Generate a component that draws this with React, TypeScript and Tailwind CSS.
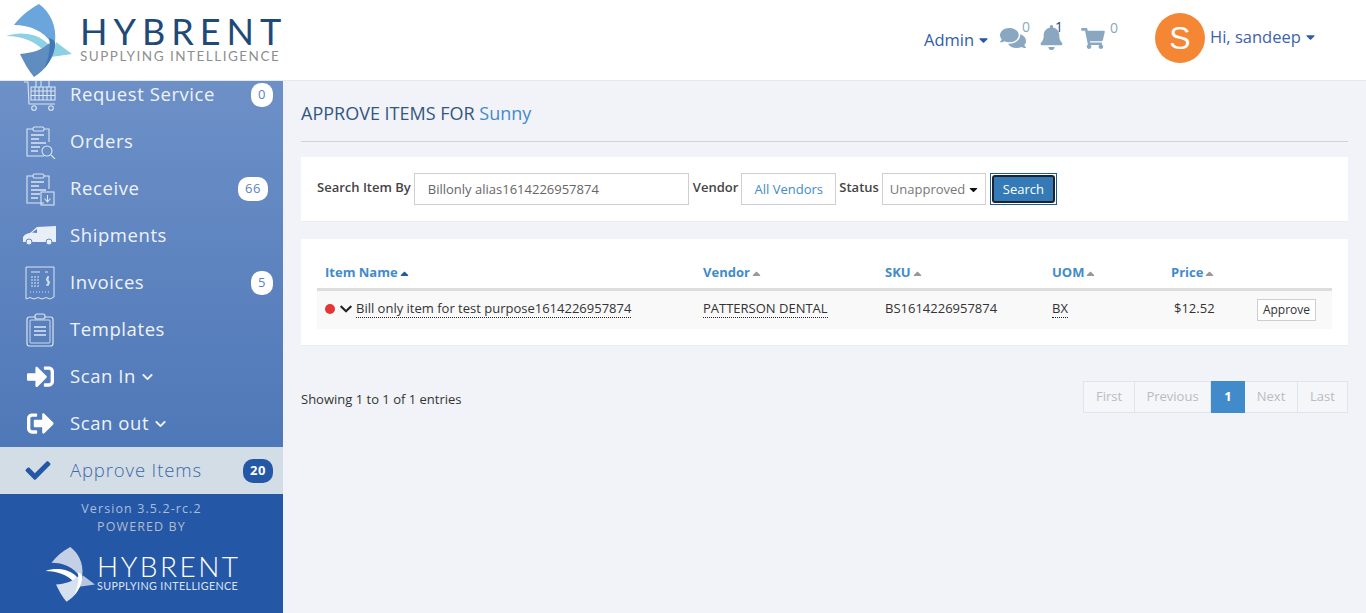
import React from "react";
import { FaComments, FaBell, FaShoppingCart, FaCheck, FaSignInAlt, FaSignOutAlt, FaChevronDown, FaCaretDown, FaCaretUp } from "react-icons/fa";

const sans = "font-['Open_Sans',sans-serif]";

function Sail({ mono, className }: { mono?: boolean; className?: string }) {
  return (
    <svg viewBox="0 0 80 80" className={className}>
      <path d="M39 4 C28 10 20 17 14 25 C30 25 44 31 52 44 L55 42 C57 26 50 12 39 4 Z" fill={mono ? "#c4d0e6" : "#6aa6dc"} />
      <path d="M6 36 C20 31 38 33 48 44 C47 47 45 49 43 50 C36 42 22 36 6 36 Z" fill={mono ? "#ffffff" : "#8ed0e4"} />
      <path d="M56 42 L72 54 L51 57 C53 52 55 47 56 42 Z" fill={mono ? "#b8c7e0" : "#8dd0e2"} />
      <path d="M20 54 C32 53 42 50 48 44 L55 42 C55 56 46 70 34 77 C28 70 24 62 20 54 Z" fill={mono ? "#d7e0ef" : "#5f8dbf"} />
      <path d="M49 38 C53 39 56 41 55 46 C54 54 50 62 44 69 C49 58 51 46 49 38 Z" fill={mono ? "#ffffff" : "#3f78b4"} />
    </svg>
  );
}

function Clip({ kind }: { kind: "search" | "down" }) {
  return (
    <svg viewBox="0 0 32 34" className="h-[34px] w-[32px]" fill="none" stroke="#dbe5f3" strokeWidth="1.1">
      <path d="M9 4 H3 V31 H20" />
      <path d="M20 4 H25 V17" />
      <rect x="9" y="2" width="11" height="4" rx="1.5" />
      <path d="M7 10 H20 M7 14 H15 M7 18 H22 M7 22 H16 M7 26 H14" strokeWidth="1.3" />
      {kind === "search" && (<><circle cx="23" cy="26" r="5" /><path d="M27 30 L31 34" /></>)}
      {kind === "down" && (<><rect x="17" y="20" width="13" height="13" /><path d="M23.500 23 V29 M20.500 26.500 L23.500 30 L26.500 26.500" /></>)}
    </svg>
  );
}

function ClipPlain() {
  return (
    <svg viewBox="0 0 28 34" className="h-[34px] w-[28px]" fill="none" stroke="#dbe5f3" strokeWidth="1.2">
      <rect x="1" y="4" width="26" height="29" rx="2.500" />
      <rect x="4" y="7" width="20" height="23" rx="1" strokeWidth="0.900" />
      <rect x="9" y="1" width="10" height="5" rx="2" fill="#5f87c0" />
      <path d="M8 14 H20 M8 18 H20 M8 22 H20" strokeWidth="1.400" />
    </svg>
  );
}

function CartGrid() {
  return (
    <svg viewBox="0 0 34 34" className="h-[34px] w-[34px]" fill="none" stroke="#dbe5f3" strokeWidth="1.1">
      <path d="M1 4 H5 L6 26 H32" />
      <path d="M8 9 H32 V22 H8 Z M8 13 H32 M8 17.500 H32 M12 9 V22 M16 9 V22 M20 9 V22 M24 9 V22 M28 9 V22" />
      <path d="M13 9 V2 M18 9 V2 M26 9 V2 M13 2 H18" />
      <circle cx="11" cy="30" r="2.300" /><circle cx="28" cy="30" r="2.300" />
    </svg>
  );
}

function Van() {
  return (
    <svg viewBox="0 0 34 20" className="h-[20px] w-[34px]" fill="#e9eff8">
      <path d="M14 1 L33 0 V16 H0 V11 C2 8 5 7 7 7 Z" />
      <path d="M9 6.500 L14 3 V7 Z" fill="#6088c0" />
      <circle cx="6" cy="16" r="3" stroke="#6088c0" /><circle cx="26" cy="16" r="3" stroke="#6088c0" />
    </svg>
  );
}

function Invoice() {
  return (
    <svg viewBox="0 0 30 34" className="h-[34px] w-[30px]" fill="none" stroke="#dbe5f3" strokeWidth="1">
      <path d="M1 1 H29 V31 L25 33 L21 31.500 L17 33 L13 31.500 L9 33 L5 31.500 L1 33 Z" />
      <path d="M6 6 H15 M20 6 H23" strokeWidth="1.200" />
      <path d="M6 11 H15 M6 14 H15 M6 17 H15 M6 20 H15" strokeDasharray="2 1" strokeWidth="1.200" />
      <path d="M5 26 H25" strokeDasharray="1 2" />
      <path d="M24 11 C21 11 21 15 23 15 C25 15 25 19 21 19 M23 10 V20" strokeWidth="1.100" />
    </svg>
  );
}

const menu: { label: string; icon: React.ReactNode; badge?: string; chevron?: boolean }[] = [
  { label: "Request Service", icon: <CartGrid />, badge: "0" },
  { label: "Orders", icon: <Clip kind="search" /> },
  { label: "Receive", icon: <Clip kind="down" />, badge: "66" },
  { label: "Shipments", icon: <Van /> },
  { label: "Invoices", icon: <Invoice />, badge: "5" },
  { label: "Templates", icon: <ClipPlain /> },
  { label: "Scan In", icon: <FaSignInAlt className="h-[27px] w-[27px] text-white" />, chevron: true },
  { label: "Scan out", icon: <FaSignOutAlt className="h-[27px] w-[27px] text-white" />, chevron: true },
];

function Sidebar() {
  return (
    <aside className="flex w-[283px] shrink-0 flex-col bg-[#2557a7]">
      <div className="h-[366px] overflow-hidden bg-gradient-to-b from-[#6d90c7] to-[#4f78b8]">
        <div className="-mt-[10px]">
          {menu.map((m) => (
            <div key={m.label} className="flex h-[47px] items-center text-white">
              <div className="flex w-[70px] shrink-0 justify-center pl-[10px]">{m.icon}</div>
              <span className="-translate-y-px text-[18.500px] tracking-[0.58px] text-[#eef3fa]">{m.label}</span>
              {m.chevron && <FaChevronDown className="ml-[6px] h-[12px] w-[11px] text-[#eef3fa]" />}
              {m.badge && (
                <span className={`ml-auto flex h-[24px] items-center justify-center rounded-[10px] bg-white text-[13px] font-medium tracking-[0.5px] text-[#5c83bf] ${m.badge === "66" ? "mr-[15px] w-[30px]" : "mr-[10px] w-[22px]"}`}>
                  {m.badge}
                </span>
              )}
            </div>
          ))}
        </div>
      </div>
      <div className="flex h-[47px] items-center bg-[#d3dde5]">
        <div className="flex w-[70px] shrink-0 justify-center pl-[7px] pr-[1px]">
          <FaCheck className="h-[25px] w-[26px] text-[#2557a7]" />
        </div>
        <span className="-translate-y-px text-[18.500px] font-light tracking-[0.87px] text-[#3f68ac]">Approve Items</span>
        <span className="ml-auto mr-[10px] flex h-[24px] w-[30px] items-center justify-center rounded-[10px] bg-[#2557a7] text-[13px] font-bold tracking-[0.5px] text-white">20</span>
      </div>
      <div className="flex flex-1 flex-col items-center pt-[6px]">
        <div className="text-[12.500px] leading-[18px] tracking-[1.1px] text-[#a9bedc]">Version 3.5.2-rc.2</div>
        <div className="text-[12.500px] leading-[18px] tracking-[1.1px] text-[#b2bccb]">POWERED BY</div>
        <div className="mt-[9px] flex w-full pl-[44px]">
          <Sail mono className="h-[60px] w-[60px] shrink-0 -translate-x-[3px] -translate-y-px" />
          <div className="-ml-[7px] flex flex-col pt-[7px] text-white">
            <span className="font-['Lato',sans-serif] text-[28px] font-light leading-[28px] tracking-[2.5px]">HYBRENT</span>
            <span className="font-['Lato',sans-serif] text-[10.700px] leading-[12px] tracking-[0.4px] text-[#dbe4f2]">SUPPLYING INTELLIGENCE</span>
          </div>
        </div>
      </div>
    </aside>
  );
}

function Header() {
  return (
    <header className="flex h-[81px] shrink-0 border-b border-[#e6e8ec] bg-white">
      <div className="flex w-[283px] shrink-0 items-start">
        <Sail className="h-[80px] w-[80px] shrink-0" />
        <div className="flex w-[203px] flex-col whitespace-nowrap pt-[13px]">
          <span className="font-['Lato',sans-serif] text-[36px] leading-[37px] tracking-[6px] text-[#1f4a78]">HYBRENT</span>
          <span className="font-['Lato',sans-serif] text-[13.500px] leading-[12px] tracking-[1.5px] text-[#8d8f90]">SUPPLYING INTELLIGENCE</span>
        </div>
      </div>
      <div className="ml-[641px] flex items-start">
        <div className="mt-[29px] flex w-[76px] items-center text-[16.500px] leading-[22px] text-[#2f5ea8]">
          Admin<FaCaretDown className="ml-[5px] h-[14px] w-[9px] text-[#2557a7]" />
        </div>
        <FaComments className="mt-[26px] h-[24px] w-[26px] text-[#8aa7c2]" />
        <span className="-ml-[4px] mt-[18px] w-[14px] text-[14px] leading-[18px] text-[#8aa7c2]">0</span>
        <div className="relative ml-[4px] mt-[25px] w-[41px]">
          <FaBell className="h-[25px] w-[23px] text-[#8aa7c2]" />
          <span className="absolute left-[15px] -top-[7px] text-[14px] leading-[18px] text-[#1f4a78]">1</span>
        </div>
        <FaShoppingCart className="mt-[28px] h-[21px] w-[24px] text-[#8aa7c2]" />
        <span className="ml-[5px] mt-[19px] w-[45px] text-[14px] leading-[18px] text-[#8aa7c2]">0</span>
        <div className="mt-[13px] flex h-[50px] w-[50px] items-center justify-center rounded-full bg-[#f58634] font-['Liberation_Sans',sans-serif] text-[32px] text-white">S</div>
        <div className="ml-[5px] mt-[26px] flex items-center text-[16.500px] leading-[22px] text-[#3d62ae]">
          Hi, sandeep<FaCaretDown className="ml-[5px] h-[14px] w-[9px] text-[#2f5ea8]" />
        </div>
      </div>
    </header>
  );
}

const box = "flex h-[32px] items-center border border-[#cfcfcf] bg-white pt-[2px] text-[13px]";

function Th({ label, active }: { label: string; active?: boolean }) {
  return (
    <div className="flex items-center pl-[8px] text-[13px] font-bold text-[#428bca]">
      {label}
      <FaCaretUp className={`ml-[2px] h-[13px] w-[9px] ${active ? "text-[#2557a7]" : "text-[#999999]"}`} />
    </div>
  );
}

function Dotted({ children }: { children: React.ReactNode }) {
  return <span className="border-b border-dotted border-[#222222] leading-[15px]">{children}</span>;
}

function Page({ label, active, w }: { label: string; active?: boolean; w: string }) {
  return (
    <div className={`flex h-full items-center justify-center text-[13px] ${w} ${active ? "bg-[#428bca] font-bold text-white" : "border-y border-r border-[#e1e4e8] text-[#b9bcc0]"}`}>
      {label}
    </div>
  );
}

const label = "mt-[5px] text-[13px] font-semibold leading-[18px] text-[#444444]";

export default function App() {
  return (
    <div className={`flex h-[613px] w-[1366px] flex-col overflow-hidden bg-[#f1f3f8] ${sans}`}>
      <Header />
      <div className="flex flex-1 overflow-hidden">
        <Sidebar />
        <main className="flex-1 px-[18px]">
          <div className="flex h-[61px] items-center border-b border-[#cfd2d6] pt-[5px] text-[18px] text-[#34567f]">
            <span>APPROVE ITEMS FOR&nbsp;</span><span className="text-[#428bca]">Sunny</span>
          </div>
          <section className="mt-[15px] flex h-[65px] items-start border-b border-[#ebedf0] bg-white pl-[16px] pt-[16px] text-[#333333]">
            <span className={label}>Search Item By</span>
            <div className={`${box} ml-[3px] w-[275px] pl-[13px] text-[#666666]`}>Billonly alias1614226957874</div>
            <span className={`${label} ml-[4px]`}>Vendor</span>
            <div className={`${box} ml-[3px] w-[95px] justify-center text-[#428bca]`}>All Vendors</div>
            <span className={`${label} ml-[3px]`}>Status</span>
            <div className={`${box} ml-[3px] w-[104px] pl-[7px] text-[#777777]`}>
              Unapproved<FaCaretDown className="ml-[4px] h-[13px] w-[9px] -translate-y-px text-[#111111]" />
            </div>
            <div className="ml-[4px] h-[32px] w-[67px] border border-[#1f5b92] p-px">
              <div className="flex h-full items-center justify-center rounded-[3px] border-2 border-[#1a2330] bg-[#337ab7] pt-[1px] text-[13px] text-white">Search</div>
            </div>
          </section>
          <section className="mt-[17px] h-[107px] border-b border-[#ebedf0] bg-white px-[16px] pt-[22px]">
            <div className="grid h-[30px] grid-cols-[378px_182px_167px_119px_1fr] items-center border-b-[3px] border-[#dddddd] pb-[3px]">
              <Th label="Item Name" active />
              <Th label="Vendor" />
              <Th label="SKU" />
              <Th label="UOM" />
              <Th label="Price" />
            </div>
            <div className="grid h-[38px] grid-cols-[378px_182px_167px_119px_1fr] items-center bg-[#f9f9f9] pb-[2px] text-[13px] text-[#333333]">
              <div className="flex items-center pl-[8px]">
                <span className="h-[10px] w-[10px] rounded-full bg-[#e53535]" />
                <FaChevronDown className="ml-[5px] h-[14px] w-[12px] text-[#222222]" />
                <span className="ml-[4px]"><Dotted>Bill only item for test purpose1614226957874</Dotted></span>
              </div>
              <div className="pl-[8px]"><Dotted>PATTERSON DENTAL</Dotted></div>
              <div className="pl-[8px]">BS1614226957874</div>
              <div className="pl-[8px]"><Dotted>BX</Dotted></div>
              <div className="flex items-center justify-between pl-[11px] pr-[16px]">
                <span>$12.52</span>
                <span className="flex h-[22px] w-[59px] translate-y-px items-center justify-center border border-[#cfcfcf] bg-white text-[12px]">Approve</span>
              </div>
            </div>
          </section>
          <div className="mt-[35px] flex items-start justify-between">
            <span className="pt-[9px] text-[13px] leading-[18px] text-[#333333]">Showing 1 to 1 of 1 entries</span>
            <div className="flex h-[32px] bg-[#f5f6f9]">
              <div className="h-full border-l border-[#e1e4e8]" />
              <Page label="First" w="w-[51px]" />
              <Page label="Previous" w="w-[76px]" />
              <Page label="1" active w="w-[34px]" />
              <Page label="Next" w="w-[53px]" />
              <Page label="Last" w="w-[50px]" />
            </div>
          </div>
        </main>
      </div>
    </div>
  );
}
